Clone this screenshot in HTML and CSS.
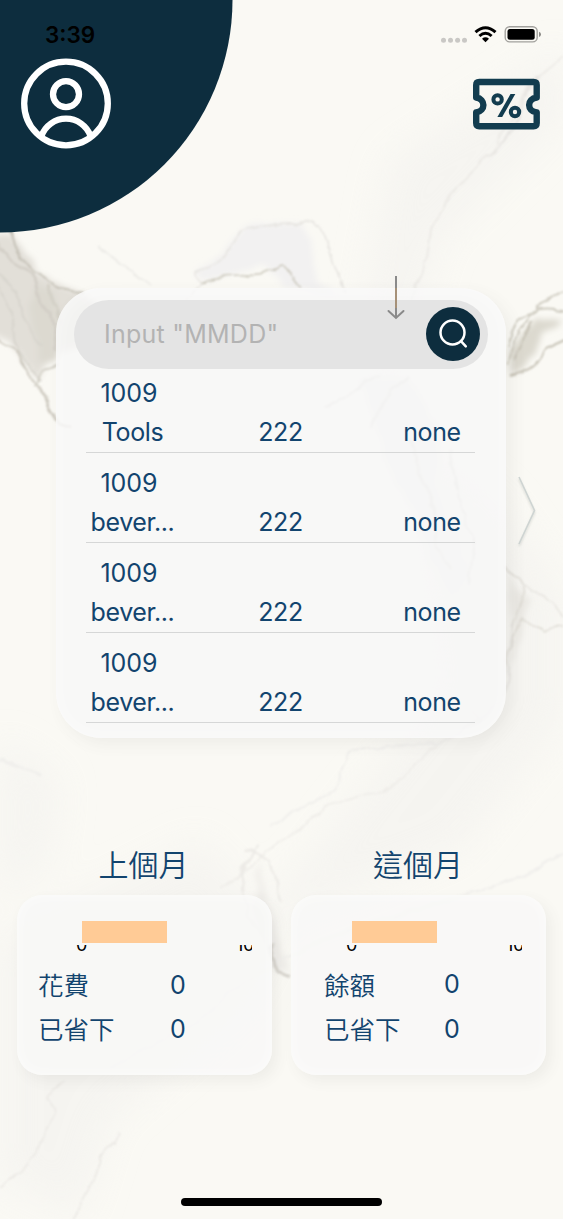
FILE: index.html
```html
<!DOCTYPE html>
<html lang="zh-Hant">
<head>
<meta charset="utf-8">
<title>Budget</title>
<link rel="stylesheet" href="styles.css">
</head>
<body>
<div class="screen">
  <svg class="marble" viewBox="0 0 563 1219" aria-hidden="true">
    <defs>
      <filter id="vein" x="-10%" y="-10%" width="120%" height="120%"><feTurbulence type="fractalNoise" baseFrequency=".045" numOctaves="3" seed="4" result="n"/><feDisplacementMap in="SourceGraphic" in2="n" scale="10" xChannelSelector="R" yChannelSelector="G"/><feGaussianBlur stdDeviation="1.1"/></filter>
      <filter id="soft" x="-30%" y="-30%" width="160%" height="160%"><feTurbulence type="fractalNoise" baseFrequency=".04" numOctaves="3" seed="7" result="n"/><feDisplacementMap in="SourceGraphic" in2="n" scale="12" xChannelSelector="R" yChannelSelector="G"/><feGaussianBlur stdDeviation="3"/></filter>
      <filter id="b18" x="-50%" y="-50%" width="200%" height="200%"><feGaussianBlur stdDeviation="18"/></filter>
    </defs>
    <rect width="563" height="1219" fill="#faf9f4"/>
    <g filter="url(#b18)" fill="#f2f1ee" opacity=".55">
      <path d="M390 160L563 50V120L440 240L390 420L360 330Z"/>
      <path d="M400 420L500 500L563 590V720L460 850L250 930L440 690Z"/>
      <path d="M0 940L200 840L280 930L240 1010L110 1120L80 1219L0 1180Z"/>
      <path d="M0 740L60 780L50 860L0 900Z"/>
    </g>
    <g filter="url(#soft)">
      <path d="M-12 235L15 238L36 272L85 295L120 330L60 355L42 368L35 382L20 352L-12 335Z" fill="#e2dfd8"/>
      <path d="M36 282L56 296L56 362L40 362L30 300Z" fill="#dcd9d0"/>
      <path d="M194 275L225 250L245 225L300 222L320 280L345 300L285 285L265 265L205 280Z" fill="#f2f1f1"/>
      <path d="M563 318L535 318L508 350L510 372L525 368L543 338Z" fill="#dcd9cf"/>
      <path d="M360 378L410 380L440 430L435 480L470 570L450 600L415 520L390 470Z" fill="#efefed"/>
      <path d="M510 575L530 600L518 640L504 680L512 630Z" fill="#eae8e3"/>
      <path d="M258 860L275 925L290 970L275 972L255 920Z" fill="#efede9"/>
    </g>
    <g filter="url(#vein)" fill="none" stroke-linejoin="round">
      <path d="M10 228Q18 258 34 272L60 288L85 293" stroke="#c6c2b8" stroke-width="2"/>
      <path d="M-4 242L12 262L32 275L38 300L50 315L57 350" stroke="#d3cfc7" stroke-width="3"/>
      <path d="M-4 270L18 292L24 320L45 348M-4 282L11 310L15 345L40 380" stroke="#d8d5ce" stroke-width="2"/>
      <path d="M-4 338L18 352L31 380L45 397L58 424L74 428" stroke="#ccc8be" stroke-width="2"/>
      <path d="M48 285L60 325M58 364L42 370L32 386" stroke="#d4d1c8" stroke-width="3"/>
      <path d="M98 245L122 265L150 285" stroke="#ecebe7" stroke-width="2"/>
      <path d="M185 298L202 283L194 274L210 266L223 257L240 232L264 225L314 221L325 231L333 262L344 292" stroke="#e6e4e0" stroke-width="1.5"/>
      <path d="M202 283Q208 277 240 276L264 272L280 265L290 272L302 288" stroke="#cdcabf" stroke-width="1.6"/>
      <path d="M563 55L530 85L494 150L442 205L430 230L425 266L410 300" stroke="#eceae6" stroke-width="2"/>
      <path d="M535 78L505 143L490 155" stroke="#e6e4e1" stroke-width="2"/>
      <path d="M567 290Q544 298 535 312L518 317L507 345M567 312Q540 306 531 314L515 337L508 367" stroke="#cecbc0" stroke-width="2"/>
      <path d="M567 339L547 348L534 366L525 372L510 376M532 320L515 360" stroke="#c8c4b8" stroke-width="2"/>
      <path d="M325 408L360 385L380 375M370 426L393 390L408 376M410 440L422 478L435 510L437 548L450 570M450 450L459 500L474 540L468 585" stroke="#dcdad6" stroke-width="2"/>
      <path d="M505 565L526 588L524 604L514 623L508 665L514 637L524 621L545 632L563 625" stroke="#dddad3" stroke-width="1.5"/>
      <path d="M525 588L545 596L563 615M513 620L506 695" stroke="#e6e4df" stroke-width="1.5"/>
      <path d="M470 710L480 720L430 750L395 785L330 805L220 888" stroke="#eeece8" stroke-width="1.5"/>
      <path d="M505 700L440 745L350 750L335 790L270 825M0 758L25 769L40 775M563 855L500 885L380 920L300 950L240 985L198 1022L110 1068" stroke="#f0efec" stroke-width="2"/>
      <path d="M258 845L240 872L248 915L268 940M245 850L270 860L280 900" stroke="#eceae6" stroke-width="2"/>
      <path d="M270 945L277 972L290 976" stroke="#d6d3cc" stroke-width="4"/>
      <path d="M65 1080L48 1098L56 1110L30 1165L0 1190M115 1140L98 1160L95 1175L75 1219M114 1145L118 1133" stroke="#eae8e4" stroke-width="1.5"/>
    </g>
    <circle class="corner" cx="0" cy="0" r="232.5"/>
  </svg>

  <div class="statusbar">
    <span class="time">3:39</span>
    <svg class="status-icons" viewBox="0 0 102 20" aria-hidden="true">
      <g fill="#c9c8c5"><circle cx="3.5" cy="15.3" r="2.5"/><circle cx="10.5" cy="15.3" r="2.5"/><circle cx="17.6" cy="15.3" r="2.5"/><circle cx="24.5" cy="15.3" r="2.5"/></g>
      <g fill="none" stroke="#000" stroke-width="3"><path d="M35.5 7.2Q45.5-1.8 55.5 7.2"/><path d="M39.4 11Q45.5 5.6 51.6 11"/></g>
      <path d="M45.5 17.2L42 13.7Q45.5 11 49 13.7Z"/>
      <rect x="65.2" y="1.7" width="32" height="15.2" rx="4.5" fill="none" stroke="#a2a19d" stroke-width="1.4"/>
      <rect x="67.5" y="4" width="27.2" height="10.8" rx="2.5"/>
      <path d="M99 6.7Q101 7.2 101 9.3T99 12Z" fill="#8d8c88"/>
    </svg>
  </div>

  <header class="header">
    <svg class="avatar" viewBox="0 0 90 90" fill="none" stroke="#fff" stroke-width="6.3">
      <circle cx="45" cy="45" r="41.8"/><circle cx="45" cy="35.7" r="13"/>
      <path d="M20.5 77.5A26 26 0 0 1 69.5 77.5"/>
    </svg>
    <svg class="ticket" viewBox="0 0 67 52" fill="none" stroke="#123c4f">
      <path stroke-width="6.4" stroke-linejoin="round" d="M3.2 19.5V7Q3.2 4 6.3 4H60.6Q63.7 4 63.7 7V19.5C53.6 21 53.6 33 63.7 34.5V45Q63.7 48.2 60.6 48.2H6.3Q3.2 48.2 3.2 45V34.5C12.8 33 12.8 21 3.2 19.5Z"/>
      <g stroke-width="4"><circle cx="24.6" cy="21.4" r="4.2"/><circle cx="42" cy="34" r="4.2"/></g>
      <path d="M37.5 16H42.3L29.2 39H24.4Z" fill="#123c4f" stroke="none"/>
    </svg>
  </header>

  <main class="main">
    <section class="records">
      <div class="search">
        <span class="placeholder">Input "MMDD"</span>
        <span class="search-btn">
          <svg viewBox="0 0 54 54" fill="none" stroke="#fff" stroke-width="2.5" stroke-linecap="round"><circle cx="26.5" cy="25.5" r="12"/><path d="M35.2 34.4L39.8 39.3"/></svg>
        </span>
      </div>
      <ul class="list">
        <li class="row"><span class="date">1009</span><span class="kind">Tools</span><span class="amount">222</span><span class="note">none</span></li>
        <li class="row"><span class="date">1009</span><span class="kind">bever...</span><span class="amount">222</span><span class="note">none</span></li>
        <li class="row"><span class="date">1009</span><span class="kind">bever...</span><span class="amount">222</span><span class="note">none</span></li>
        <li class="row"><span class="date">1009</span><span class="kind">bever...</span><span class="amount">222</span><span class="note">none</span></li>
      </ul>
      <svg class="down" viewBox="0 0 20 46" fill="none" stroke="#8a8a8a" stroke-width="2"><path d="M10 0V42"/><path d="M10 12V32" stroke="#c89a62" stroke-width=".9"/><path d="M2.5 35L10 42L17.5 35" stroke-linecap="round"/></svg>
    </section>
    <svg class="next" viewBox="0 0 24 76" fill="none" stroke="#ced4d2" stroke-width="1.6"><path d="M4 2L19.5 35.5L4 69"/></svg>
  </main>

  <section class="summary">
    <div class="month">
      <h2>上個月</h2>
      <div class="card">
        <div class="bar"></div>
        <div class="axis"><span>0</span><span>10</span></div>
        <dl class="stats"><dt>花費</dt><dd>0</dd><dt>已省下</dt><dd>0</dd></dl>
      </div>
    </div>
    <div class="month current">
      <h2>這個月</h2>
      <div class="card">
        <div class="bar"></div>
        <div class="axis"><span>0</span><span>10</span></div>
        <dl class="stats"><dt>餘額</dt><dd class="raised">0</dd><dt>已省下</dt><dd>0</dd></dl>
      </div>
    </div>
  </section>
  <div class="home-indicator"></div>
</div>
</body>
</html>
```
FILE: styles.css
```css
* { box-sizing: border-box; margin: 0; padding: 0; }
body { background: #faf9f4; font-family: Inter, "Noto Sans CJK TC", sans-serif; color: #12446e; }
.screen { position: relative; isolation: isolate; width: 563px; height: 1219px; overflow: hidden; display: flex; flex-direction: column; }
.marble { position: absolute; inset: 0; width: 563px; height: 1219px; z-index: -1; }
.corner { fill: #0d2d3e; }

.statusbar { height: 58px; padding: 20px 21px 0 45px; display: flex; justify-content: space-between; align-items: flex-start; color: #000; }
.time { font-size: 22.5px; line-height: 30px; font-weight: 600; }
.status-icons { width: 102px; height: 20px; margin-top: 5px; }

.header { height: 230px; padding: 0 23px 0 21px; display: flex; justify-content: space-between; align-items: flex-start; }
.avatar { width: 90px; height: 91px; }
.ticket { width: 67px; height: 52px; margin-top: 20px; }

.main { display: flex; height: 450px; padding-left: 56px; }
.records { position: relative; width: 450px; height: 450px; padding: 12px 18px 0; border-radius: 45px; background: rgba(248, 248, 247, .8); box-shadow: 6px 6px 16px rgba(90, 90, 80, .07), inset 0 0 20px rgba(255, 255, 255, .5); }
.search { position: relative; height: 69px; border-radius: 35px; background: #e4e4e4; padding: 0 8px 1px 30px; display: flex; justify-content: space-between; align-items: center; }
.placeholder { font-size: 25px; letter-spacing: .25px; color: #b3b3b3; }
.search-btn { width: 54px; height: 54px; border-radius: 50%; background: #0d2d3e; }
.search-btn svg { display: block; width: 54px; height: 54px; }
.down { position: absolute; left: 330px; top: -12px; width: 20px; height: 46px; }

.list { list-style: none; width: 389px; margin: -6px 0 0 12px; }
.row { height: 90px; padding-top: 11px; border-bottom: 1px solid #d6d7d7; display: grid; grid-template-columns: 93px 1fr 86px; grid-template-rows: 39px 39px; line-height: 39px; text-align: center; font-size: 25px; font-weight: 380; letter-spacing: -.4px; }
.kind { grid-row: 2; }
.date { padding-right: 7px; letter-spacing: 0; }
.amount { grid-area: 2 / 2; padding-right: 7px; }
.note { grid-area: 2 / 3; }
.next { width: 24px; height: 76px; margin: 187px 0 0 9px; filter: drop-shadow(0 2px 1px rgba(90, 100, 90, .2)); }

.summary { padding: 105px 17px 0; display: flex; justify-content: space-between; }
.month { width: 255px; }
.month h2 { height: 52px; line-height: 41px; padding-right: 2px; text-align: center; font-family: "Noto Sans CJK TC", sans-serif; font-size: 30px; font-weight: 350; }
.card { height: 180px; padding: 26px 20px 0 21px; border-radius: 25px; background: rgba(248, 248, 247, .85); box-shadow: 5px 6px 14px rgba(90, 90, 80, .07), inset 0 0 16px rgba(255, 255, 255, .6); }
.bar { width: 85px; height: 22px; margin-left: 44px; background: #ffcb96; }
.axis { height: 8px; width: 176px; margin: 2px 0 0 38px; overflow: hidden; display: flex; justify-content: space-between; align-items: flex-end; color: #000; font-size: 18px; line-height: 16px; letter-spacing: -.3px; }
.axis span:last-child { width: 16px; }
.stats { display: grid; grid-template-columns: 132px 1fr; grid-auto-rows: 44px; margin-top: 10px; line-height: 44px; font-size: 25px; font-weight: 380; }
.stats dt { height: 44px; line-height: 41px; font-family: "Noto Sans CJK TC", sans-serif; font-weight: 350; font-size: 25.5px; }
.current h2 { padding: 0 1px 0 0; }
.current .bar { margin-left: 40px; }
.current .axis { margin-left: 34px; }
.current .stats { grid-template-columns: 120px 1fr; margin-left: 12px; }
.stats .raised { padding-bottom: 2px; line-height: 42px; }

.home-indicator { width: 201px; height: 8px; margin: 123px 0 0 181px; border-radius: 4px; background: #000; }
```
